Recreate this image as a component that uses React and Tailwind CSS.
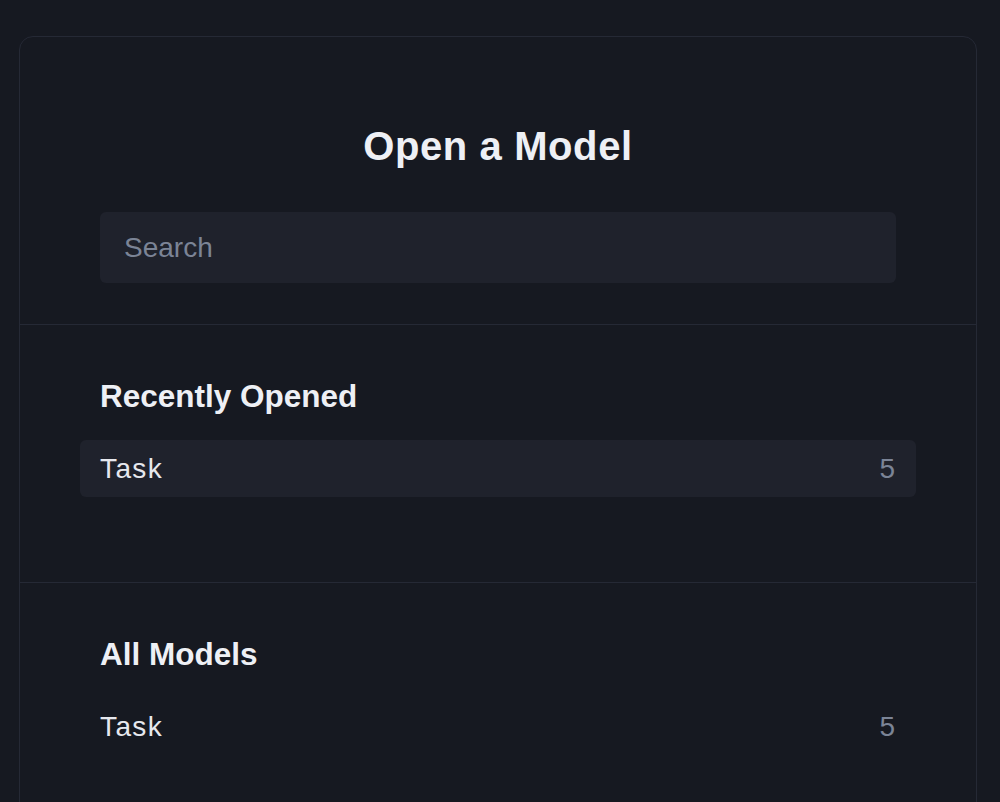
const recent = [{ name: 'Task', count: 5 }];
const models = [{ name: 'Task', count: 5 }];

const Row = ({ item, active }) => (
  <div
    className={`-mx-5 h-[57px] px-5 flex items-center justify-between rounded-md ${
      active ? 'bg-[#1f222c]' : ''
    }`}
  >
    <span className="text-[28px] tracking-[0.05em] text-[#e6e8ee]">{item.name}</span>
    <span className="text-[28px] text-[#7b8496] pr-[1px]">{item.count}</span>
  </div>
);

const Section = ({ title, items, highlightFirst }) => (
  <section className="px-[80px] pt-[51px] pb-[85px] border-t border-[#252935]">
    <h2 className="text-[31.5px] leading-[40px] font-bold text-[#eef0f5]">{title}</h2>
    <div className="mt-[24px] flex flex-col">
      {items.map((item, i) => (
        <Row key={item.name + i} item={item} active={highlightFirst && i === 0} />
      ))}
    </div>
  </section>
);

export default function App() {
  return (
    <div
      className="min-h-screen bg-[#161921] pt-[36px] pl-[19px]"
      style={{ fontFamily: '"Liberation Sans", Arial, sans-serif' }}
    >
      <div className="w-[958px] min-h-[800px] rounded-[14px] border border-[#252935] bg-[#161921]">
        <header className="px-[80px] pt-[85px] pb-[41px]">
          <h1 className="text-center text-[40px] tracking-[0.015em] leading-[48px] font-bold text-[#eef0f5]">
            Open a Model
          </h1>
          <input
            type="text"
            placeholder="Search"
            className="mt-[42px] w-full h-[71px] rounded-md bg-[#1f222c] px-6 text-[28px] text-[#e6e8ee] placeholder:text-[#7b8496] outline-none"
          />
        </header>
        <Section title="Recently Opened" items={recent} highlightFirst />
        <Section title="All Models" items={models} />
      </div>
    </div>
  );
}
